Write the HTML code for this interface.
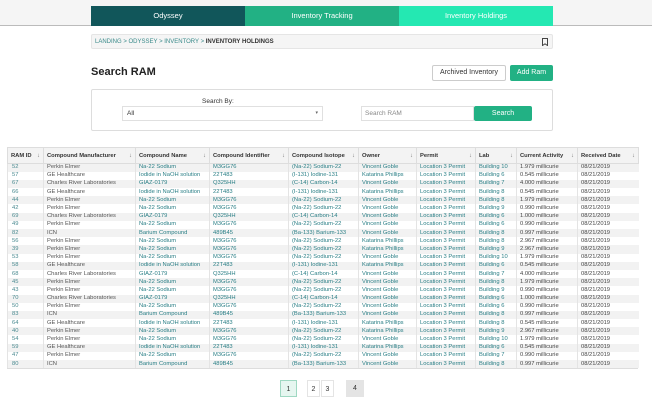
<!DOCTYPE html>
<html><head><meta charset="utf-8"><style>
*{box-sizing:border-box;margin:0;padding:0}
body{width:652px;height:401px;background:#fff;font-family:"Liberation Sans",sans-serif;position:relative;overflow:hidden}
.top{position:absolute;left:0;top:0;width:652px;height:26px;background:#f5f5f5;border-bottom:1px solid #bbb}
.tab{position:absolute;top:6px;height:20px;color:#fff;font-size:7.5px;text-align:center;line-height:20px}
.bc{position:absolute;left:91px;top:34px;width:462px;height:15px;background:#f5f5f5;border:1px solid #e5e5e5;border-radius:2px;font-size:6px;line-height:14px;padding-left:3px;color:#3a8a8a}
.bc b{color:#333}
h1{position:absolute;left:91px;top:66px;font-size:11px;font-weight:bold;color:#222}
.btn{position:absolute;font-size:7px;text-align:center;border-radius:2px}
.panel{position:absolute;left:91px;top:89px;width:462px;height:42px;border:1px solid #ddd;border-radius:2px}
table{position:absolute;left:7px;top:147px;width:631px;border-collapse:collapse;font-size:5.8px;table-layout:fixed}
th{height:16px;background:#f3f3f3;border:1px solid #ddd;text-align:left;padding-left:3px;font-weight:bold;color:#333;white-space:nowrap;overflow:hidden}
th span{float:right;color:#777;font-weight:normal;padding-right:3px}
tr.r{height:8.2px}
td{height:8.2px;line-height:7px;padding:0 0 0 3px;border-left:1px solid #e4e4e4;white-space:nowrap;overflow:hidden;color:#2a7f86}
td:nth-child(1){color:#4a8a90;padding-left:4px}
td:nth-child(2){color:#555;padding-left:3px}
td:nth-child(9),td:nth-child(10){color:#444}
tr:nth-child(even) td{background:#f2f2f2}
.pg{position:absolute;top:380px;height:17px;font-size:7px;line-height:17px;text-align:center;color:#333}
</style></head><body>
<div class="top"></div>
<div class="tab" style="left:91px;width:154px;background:#11565a">Odyssey</div>
<div class="tab" style="left:245px;width:154px;background:#22b184">Inventory Tracking</div>
<div class="tab" style="left:399px;width:154px;background:#24e8b2">Inventory Holdings</div>
<div class="bc">LANDING &gt; ODYSSEY &gt; INVENTORY &gt; <b>INVENTORY HOLDINGS</b>
<svg style="position:absolute;right:4px;top:3px" width="6" height="8" viewBox="0 0 6 8"><path d="M0.5 0.5H5.5V7.5L3 5.8L0.5 7.5Z" fill="none" stroke="#444" stroke-width="1"/></svg></div>
<h1>Search RAM</h1>
<div class="btn" style="left:432px;top:65px;width:74px;height:16px;border:1px solid #ccc;line-height:14px;color:#333">Archived Inventory</div>
<div class="btn" style="left:510px;top:65px;width:43px;height:16px;background:#22b184;color:#fff;line-height:16px">Add Ram</div>
<div class="panel"></div>
<div style="position:absolute;left:202px;top:98px;font-size:6.5px;color:#333">Search By:</div>
<div style="position:absolute;left:122px;top:106px;width:201px;height:15px;border:1px solid #e0e0e0;font-size:6.5px;line-height:13px;padding-left:4px;color:#333">All<span style="position:absolute;right:4px;font-size:5px;color:#666">▾</span></div>
<div style="position:absolute;left:361px;top:106px;width:113px;height:15px;border:1px solid #e0e0e0;font-size:6.5px;line-height:13px;padding-left:3px;color:#888">Search RAM</div>
<div class="btn" style="left:474px;top:106px;width:58px;height:15px;background:#22b184;color:#fff;line-height:15px;font-size:7px">Search</div>
<table>
<colgroup><col style="width:36px"><col style="width:92px"><col style="width:74px"><col style="width:79px"><col style="width:70px"><col style="width:58px"><col style="width:59px"><col style="width:41px"><col style="width:61px"><col style="width:61px"></colgroup>
<tr><th>RAM ID<span>↓</span></th><th>Compound Manufacturer<span>↓</span></th><th>Compound Name<span>↓</span></th><th>Compound Identifier<span>↓</span></th><th>Compound Isotope<span>↓</span></th><th>Owner<span>↓</span></th><th>Permit<span>↓</span></th><th>Lab<span>↓</span></th><th>Current Activity<span>↓</span></th><th>Received Date<span>↓</span></th></tr>
<tr class="r"><td>52</td><td>Perkin Elmer</td><td>Na-22 Sodium</td><td>M3GG76</td><td>(Na-22) Sodium-22</td><td>Vincent Goble</td><td>Location 3 Permit</td><td>Building 10</td><td>1.979 millicurie</td><td>08/21/2019</td></tr>
<tr class="r"><td>57</td><td>GE Healthcare</td><td>Iodide in NaOH solution</td><td>22T483</td><td>(I-131) Iodine-131</td><td>Katarina Phillips</td><td>Location 3 Permit</td><td>Building 6</td><td>0.545 millicurie</td><td>08/21/2019</td></tr>
<tr class="r"><td>67</td><td>Charles River Laboratories</td><td>GIAZ-0179</td><td>Q325HH</td><td>(C-14) Carbon-14</td><td>Vincent Goble</td><td>Location 3 Permit</td><td>Building 7</td><td>4.000 millicurie</td><td>08/21/2019</td></tr>
<tr class="r"><td>66</td><td>GE Healthcare</td><td>Iodide in NaOH solution</td><td>22T483</td><td>(I-131) Iodine-131</td><td>Katarina Phillips</td><td>Location 3 Permit</td><td>Building 8</td><td>0.545 millicurie</td><td>08/21/2019</td></tr>
<tr class="r"><td>44</td><td>Perkin Elmer</td><td>Na-22 Sodium</td><td>M3GG76</td><td>(Na-22) Sodium-22</td><td>Vincent Goble</td><td>Location 3 Permit</td><td>Building 8</td><td>1.979 millicurie</td><td>08/21/2019</td></tr>
<tr class="r"><td>42</td><td>Perkin Elmer</td><td>Na-22 Sodium</td><td>M3GG76</td><td>(Na-22) Sodium-22</td><td>Vincent Goble</td><td>Location 3 Permit</td><td>Building 9</td><td>0.990 millicurie</td><td>08/21/2019</td></tr>
<tr class="r"><td>69</td><td>Charles River Laboratories</td><td>GIAZ-0179</td><td>Q325HH</td><td>(C-14) Carbon-14</td><td>Vincent Goble</td><td>Location 3 Permit</td><td>Building 6</td><td>1.000 millicurie</td><td>08/21/2019</td></tr>
<tr class="r"><td>49</td><td>Perkin Elmer</td><td>Na-22 Sodium</td><td>M3GG76</td><td>(Na-22) Sodium-22</td><td>Vincent Goble</td><td>Location 3 Permit</td><td>Building 6</td><td>0.990 millicurie</td><td>08/21/2019</td></tr>
<tr class="r"><td>82</td><td>ICN</td><td>Barium Compound</td><td>489B45</td><td>(Ba-133) Barium-133</td><td>Vincent Goble</td><td>Location 3 Permit</td><td>Building 8</td><td>0.997 millicurie</td><td>08/21/2019</td></tr>
<tr class="r"><td>56</td><td>Perkin Elmer</td><td>Na-22 Sodium</td><td>M3GG76</td><td>(Na-22) Sodium-22</td><td>Katarina Phillips</td><td>Location 3 Permit</td><td>Building 8</td><td>2.967 millicurie</td><td>08/21/2019</td></tr>
<tr class="r"><td>39</td><td>Perkin Elmer</td><td>Na-22 Sodium</td><td>M3GG76</td><td>(Na-22) Sodium-22</td><td>Katarina Phillips</td><td>Location 3 Permit</td><td>Building 9</td><td>2.967 millicurie</td><td>08/21/2019</td></tr>
<tr class="r"><td>53</td><td>Perkin Elmer</td><td>Na-22 Sodium</td><td>M3GG76</td><td>(Na-22) Sodium-22</td><td>Vincent Goble</td><td>Location 3 Permit</td><td>Building 10</td><td>1.979 millicurie</td><td>08/21/2019</td></tr>
<tr class="r"><td>58</td><td>GE Healthcare</td><td>Iodide in NaOH solution</td><td>22T483</td><td>(I-131) Iodine-131</td><td>Katarina Phillips</td><td>Location 3 Permit</td><td>Building 6</td><td>0.545 millicurie</td><td>08/21/2019</td></tr>
<tr class="r"><td>68</td><td>Charles River Laboratories</td><td>GIAZ-0179</td><td>Q325HH</td><td>(C-14) Carbon-14</td><td>Vincent Goble</td><td>Location 3 Permit</td><td>Building 7</td><td>4.000 millicurie</td><td>08/21/2019</td></tr>
<tr class="r"><td>45</td><td>Perkin Elmer</td><td>Na-22 Sodium</td><td>M3GG76</td><td>(Na-22) Sodium-22</td><td>Vincent Goble</td><td>Location 3 Permit</td><td>Building 8</td><td>1.979 millicurie</td><td>08/21/2019</td></tr>
<tr class="r"><td>43</td><td>Perkin Elmer</td><td>Na-22 Sodium</td><td>M3GG76</td><td>(Na-22) Sodium-22</td><td>Vincent Goble</td><td>Location 3 Permit</td><td>Building 9</td><td>0.990 millicurie</td><td>08/21/2019</td></tr>
<tr class="r"><td>70</td><td>Charles River Laboratories</td><td>GIAZ-0179</td><td>Q325HH</td><td>(C-14) Carbon-14</td><td>Vincent Goble</td><td>Location 3 Permit</td><td>Building 6</td><td>1.000 millicurie</td><td>08/21/2019</td></tr>
<tr class="r"><td>50</td><td>Perkin Elmer</td><td>Na-22 Sodium</td><td>M3GG76</td><td>(Na-22) Sodium-22</td><td>Vincent Goble</td><td>Location 3 Permit</td><td>Building 6</td><td>0.990 millicurie</td><td>08/21/2019</td></tr>
<tr class="r"><td>83</td><td>ICN</td><td>Barium Compound</td><td>489B45</td><td>(Ba-133) Barium-133</td><td>Vincent Goble</td><td>Location 3 Permit</td><td>Building 8</td><td>0.997 millicurie</td><td>08/21/2019</td></tr>
<tr class="r"><td>64</td><td>GE Healthcare</td><td>Iodide in NaOH solution</td><td>22T483</td><td>(I-131) Iodine-131</td><td>Katarina Phillips</td><td>Location 3 Permit</td><td>Building 8</td><td>0.545 millicurie</td><td>08/21/2019</td></tr>
<tr class="r"><td>40</td><td>Perkin Elmer</td><td>Na-22 Sodium</td><td>M3GG76</td><td>(Na-22) Sodium-22</td><td>Katarina Phillips</td><td>Location 3 Permit</td><td>Building 9</td><td>2.967 millicurie</td><td>08/21/2019</td></tr>
<tr class="r"><td>54</td><td>Perkin Elmer</td><td>Na-22 Sodium</td><td>M3GG76</td><td>(Na-22) Sodium-22</td><td>Vincent Goble</td><td>Location 3 Permit</td><td>Building 10</td><td>1.979 millicurie</td><td>08/21/2019</td></tr>
<tr class="r"><td>59</td><td>GE Healthcare</td><td>Iodide in NaOH solution</td><td>22T483</td><td>(I-131) Iodine-131</td><td>Katarina Phillips</td><td>Location 3 Permit</td><td>Building 6</td><td>0.545 millicurie</td><td>08/21/2019</td></tr>
<tr class="r"><td>47</td><td>Perkin Elmer</td><td>Na-22 Sodium</td><td>M3GG76</td><td>(Na-22) Sodium-22</td><td>Vincent Goble</td><td>Location 3 Permit</td><td>Building 7</td><td>0.990 millicurie</td><td>08/21/2019</td></tr>
<tr class="r"><td>80</td><td>ICN</td><td>Barium Compound</td><td>489B45</td><td>(Ba-133) Barium-133</td><td>Vincent Goble</td><td>Location 3 Permit</td><td>Building 8</td><td>0.997 millicurie</td><td>08/21/2019</td></tr>
</table>
<div style="position:absolute;left:7px;top:368px;width:631px;height:1px;background:#ddd"></div>
<div class="pg" style="left:280px;width:17px;background:#e6f6f0;border:1px solid #9fd8c2">1</div>
<div class="pg" style="left:307px;width:13px;border:1px solid #e4e4e4">2</div>
<div class="pg" style="left:321px;width:13px;border:1px solid #e4e4e4">3</div>
<div class="pg" style="left:346px;width:18px;background:#e4e4e4">4</div>
</body></html>
